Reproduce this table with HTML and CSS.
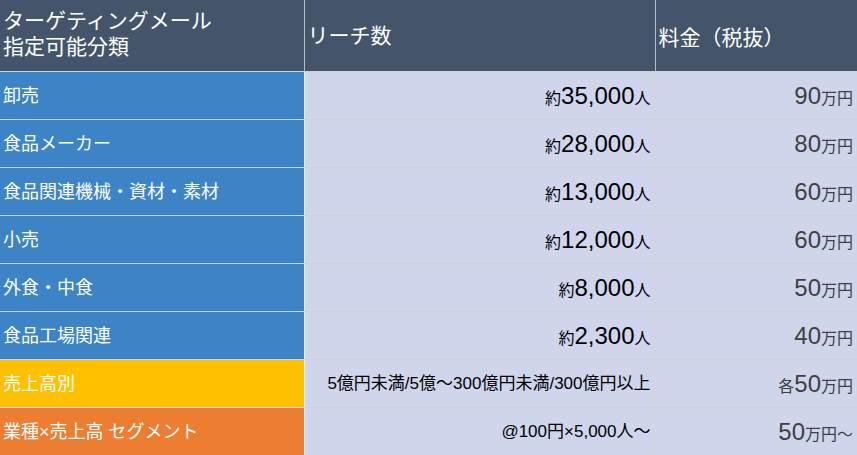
FILE: index.html
```html
<!DOCTYPE html>
<html lang="ja">
<head>
    <meta charset="UTF-8">
    <meta name="viewport" content="width=device-width, initial-scale=1.0">
    <title>ターゲティングメール 料金表</title>
    <link rel="stylesheet" href="styles.css">
</head>
<body>
    <table class="price-table">
        <colgroup>
            <col class="col-cat">
            <col class="col-reach">
            <col class="col-price">
        </colgroup>
        <thead>
            <tr>
                <th>ターゲティングメール<br>指定可能分類</th>
                <th>リーチ数</th>
                <th class="th-price">料金（税抜）</th>
            </tr>
        </thead>
        <tbody>
            <tr>
                <td class="cat">卸売</td>
                <td class="reach"><small>約</small>35,000<small>人</small></td>
                <td class="price">90<small>万円</small></td>
            </tr>
            <tr>
                <td class="cat">食品メーカー</td>
                <td class="reach"><small>約</small>28,000<small>人</small></td>
                <td class="price">80<small>万円</small></td>
            </tr>
            <tr>
                <td class="cat">食品関連機械・資材・素材</td>
                <td class="reach"><small>約</small>13,000<small>人</small></td>
                <td class="price">60<small>万円</small></td>
            </tr>
            <tr>
                <td class="cat">小売</td>
                <td class="reach"><small>約</small>12,000<small>人</small></td>
                <td class="price">60<small>万円</small></td>
            </tr>
            <tr>
                <td class="cat">外食・中食</td>
                <td class="reach"><small>約</small>8,000<small>人</small></td>
                <td class="price">50<small>万円</small></td>
            </tr>
            <tr>
                <td class="cat">食品工場関連</td>
                <td class="reach"><small>約</small>2,300<small>人</small></td>
                <td class="price">40<small>万円</small></td>
            </tr>
            <tr>
                <td class="cat cat-sales">売上高別</td>
                <td class="reach reach-text">5億円未満/5億〜300億円未満/300億円以上</td>
                <td class="price"><small>各</small>50<small>万円</small></td>
            </tr>
            <tr>
                <td class="cat cat-segment">業種×売上高 セグメント</td>
                <td class="reach reach-text">@100円×5,000人〜</td>
                <td class="price">50<small>万円〜</small></td>
            </tr>
        </tbody>
    </table>
</body>
</html>
```

FILE: styles.css
```css
body {
    margin: 0;
    font-family: "Liberation Sans", "Noto Sans CJK JP", sans-serif;
    background: #fff;
}
.price-table {
    width: 857px;
    border-collapse: collapse;
    table-layout: fixed;
}
.col-cat {
    width: 304px;
}
.col-reach {
    width: 351px;
}
.col-price {
    width: 202px;
}
th {
    height: 67px;
    background: #44546a;
    color: #fff;
    font-size: 21px;
    font-weight: normal;
    text-align: left;
    line-height: 26px;
    padding: 0 3px;
    border: 1px solid #b8bcc4;
    border-top: none;
    border-bottom: none;
}
th:first-child {
    border-left: none;
    padding-bottom: 4px;
}
th:last-child {
    border-right: none;
}
.th-price {
    padding-top: 4px;
}
td {
    height: 47px;
    padding: 0 4px;
    border: 1px solid #d2d2d6;
    border-left: none;
    border-right: none;
    background: #cfd5ea;
    line-height: 1;
}
td.cat {
    background: #3d84c6;
    color: #fff;
    font-size: 18px;
    padding-left: 3px;
    border-color: #c6d6ea;
    border-right: 1px solid #e8eef6;
}
td.cat-sales {
    background: #ffc000;
}
td.cat-segment {
    background: #ed7d31;
}
.reach {
    text-align: right;
    font-size: 24px;
    color: #000;
    border-right: 1px solid #d6d6d6;
}
.reach-text {
    font-size: 17px;
}
.price {
    text-align: right;
    font-size: 24px;
    color: #404040;
}
td small {
    font-size: 16px;
}
```
